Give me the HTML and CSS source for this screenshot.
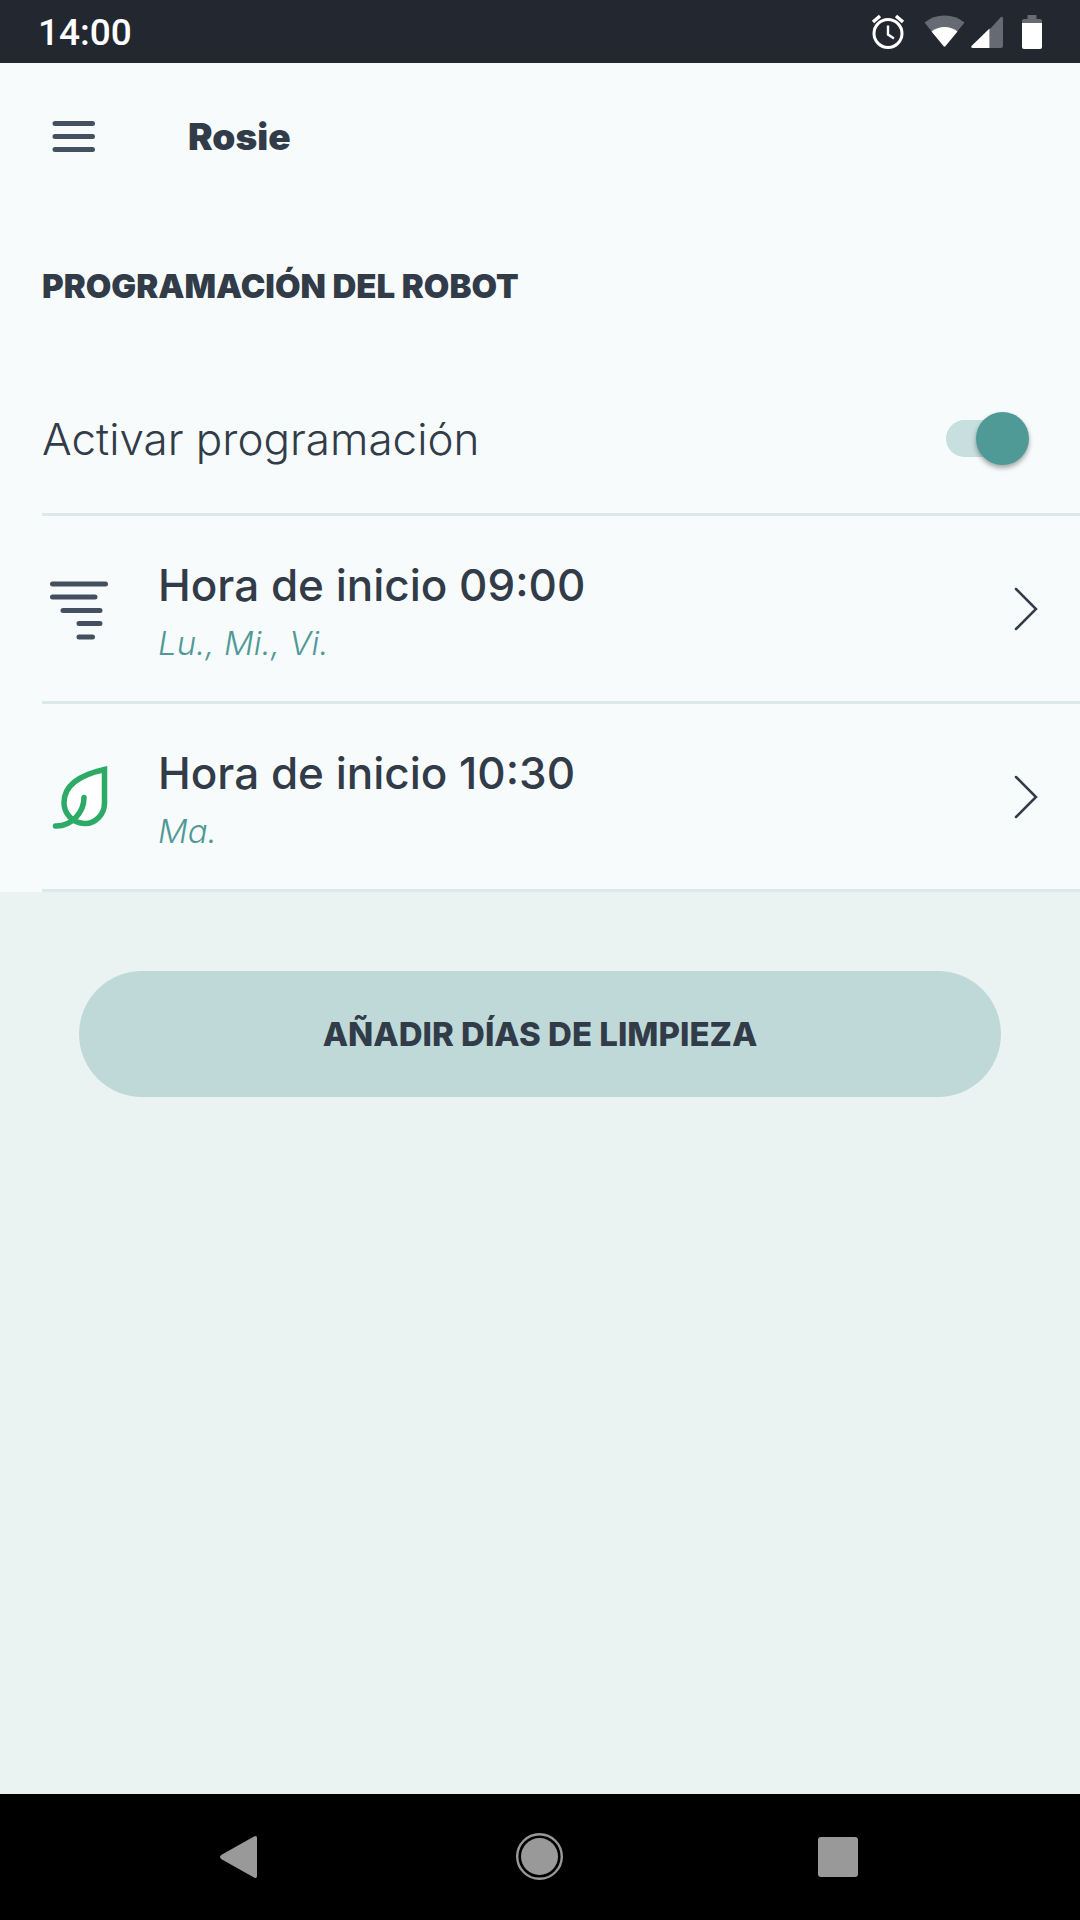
FILE: index.html
```html
<!DOCTYPE html>
<html lang="es">
<head>
<meta charset="utf-8">
<meta name="viewport" content="width=device-width, initial-scale=1">
<title>Rosie</title>
<link rel="stylesheet" href="styles.css">
</head>
<body>
<div class="status-bar">
  <time class="clock">14:00</time>
  <div class="status-icons">
    <svg class="icon-alarm" width="34" height="36" viewBox="0 0 34 36" fill="none" stroke="#fff">
      <circle cx="17" cy="19.500" r="14" stroke-width="3"/>
      <path d="M17 11.500v9l6 4" stroke-width="2.4"/>
      <path d="M2 8l7-6M32 8l-7-6" stroke-width="3.500"/>
    </svg>
    <svg class="icon-wifi" width="41" height="36" viewBox="0 0 41 36">
      <path d="M.5 8.500Q9 1.500 20.500 1.500T40.500 8.500L21.500 32q-1 1-2 0z" fill="#666a72"/>
      <path d="M7.500 17.500Q13 13 20.500 13t13 4.500L21.500 32q-1 1-2 0z" fill="#fff"/>
    </svg>
    <svg class="icon-signal" width="32" height="36" viewBox="0 0 32 36">
      <path d="M18.500 15.500L29.500 3.500q2.500-2 2.500 1V32q0 2-2 2H18.500z" fill="#666a72"/>
      <path d="M18.500 14.500V34H2q-2.500 0-1.500-2z" fill="#fff"/>
    </svg>
    <svg class="icon-battery" width="20" height="36" viewBox="0 0 20 36">
      <path d="M5.500 1h9v4H18q2 0 2 2v3H0V7q0-2 2-2h3.500z" fill="#666a72"/>
      <path d="M0 9h20v24q0 2-2 2H2q-2 0-2-2z" fill="#fff"/>
    </svg>
  </div>
</div>

<main class="screen">
  <section class="panel">
    <header class="app-bar">
      <button class="menu-button" type="button" aria-label="Menú">
        <svg width="44" height="34" viewBox="0 0 44 34" stroke="#444f5f" stroke-width="5" stroke-linecap="round">
          <path d="M3 3.500h37.500M3 16.500h37.500M3 29.500h37.500"/>
        </svg>
      </button>
      <h1 class="app-title">Rosie</h1>
    </header>
    <h2 class="section-title">PROGRAMACIÓN DEL ROBOT</h2>
    <div class="rows">
      <div class="row row-toggle">
        <label class="toggle-label" for="schedule">Activar programación</label>
        <input class="switch" id="schedule" type="checkbox" role="switch" checked>
      </div>
      <a class="row" href="#lu-mi-vi">
        <svg class="row-icon" width="68" height="68" viewBox="0 0 68 68" stroke="#444f5f" stroke-width="5" stroke-linecap="round">
          <path d="M10.500 9h53M10.500 22h42.500M21 35.500h37M37 48.500h21M37 62h13.500"/>
        </svg>
        <span class="row-text">
          <span class="row-title">Hora de inicio 09:00</span>
          <span class="row-days">Lu., Mi., Vi.</span>
        </span>
        <svg class="chevron" width="24" height="44" viewBox="0 0 24 44" fill="none" stroke="#323c49" stroke-width="2.500" stroke-linecap="round">
          <path d="M2 2l20 20L2 42"/>
        </svg>
      </a>
      <a class="row" href="#ma">
        <svg class="row-icon" width="68" height="68" viewBox="0 0 68 68" fill="none" stroke="#2dab66" stroke-width="5.500" stroke-linecap="round">
          <path d="M62.500 6.500V40C62.500 52 53 60.500 43 60.500C30 60.500 22 50 22 39.500C22 20 42 11 62.500 6.500z" fill="#fff"/>
          <path d="M42 34.500C42 49 30 63.500 13.500 63"/>
        </svg>
        <span class="row-text">
          <span class="row-title">Hora de inicio 10:30</span>
          <span class="row-days">Ma.</span>
        </span>
        <svg class="chevron" width="24" height="44" viewBox="0 0 24 44" fill="none" stroke="#323c49" stroke-width="2.500" stroke-linecap="round">
          <path d="M2 2l20 20L2 42"/>
        </svg>
      </a>
    </div>
  </section>
  <div class="actions">
    <button class="add-button" type="button">AÑADIR DÍAS DE LIMPIEZA</button>
  </div>
</main>

<nav class="nav-bar">
  <button class="nav-button" type="button" aria-label="Atrás">
    <svg width="48" height="48" viewBox="0 0 48 48" fill="#999">
      <path d="M6 21.500L38 3.500q3-1.500 3 1.500v38q0 3-3 1.500L6 26.500q-4-2.500 0-5z"/>
    </svg>
  </button>
  <button class="nav-button" type="button" aria-label="Inicio">
    <svg width="48" height="48" viewBox="0 0 48 48" fill="#999">
      <circle cx="23.500" cy="23.500" r="18.500"/>
      <circle cx="23.500" cy="23.500" r="22.300" fill="none" stroke="#999" stroke-width="2.400"/>
    </svg>
  </button>
  <button class="nav-button" type="button" aria-label="Recientes">
    <svg width="48" height="48" viewBox="0 0 48 48" fill="#999">
      <rect x="2" y="4" width="40" height="40" rx="3"/>
    </svg>
  </button>
</nav>
</body>
</html>
```
FILE: styles.css
```css
* {
  box-sizing: border-box;
}

body {
  margin: 0;
  min-height: 100vh;
  display: flex;
  flex-direction: column;
  background: #eaf3f2;
  color: #323c49;
  font-family: Inter, "Liberation Sans", sans-serif;
}

button {
  border: 0;
  padding: 0;
  background: none;
  color: inherit;
  font: inherit;
  cursor: pointer;
}

svg {
  display: block;
  flex: none;
}

.status-bar {
  height: 63px;
  padding: 2px 38px 0;
  display: flex;
  align-items: center;
  justify-content: space-between;
  background: #232830;
  color: #fff;
}

.clock {
  font: 500 37px/44px Roboto, sans-serif;
}

.status-icons {
  display: flex;
  padding-bottom: 2px;
}

.icon-wifi {
  margin-left: 19px;
}

.icon-signal {
  margin-left: 6px;
}

.icon-battery {
  margin-left: 19px;
}

.screen {
  flex: 1;
}

.panel {
  background: #f7fbfc;
}

.app-bar {
  height: 147px;
  padding: 0 52px;
  display: flex;
  align-items: center;
  gap: 92px;
}

.app-title {
  margin: 0;
  font-size: 37px;
  line-height: 44px;
  font-weight: 900;
}

.section-title {
  margin: 0;
  padding: 56px 42px 0;
  font-size: 33px;
  line-height: 40px;
  font-weight: 900;
}

.rows {
  padding: 58px 0 0 42px;
}

.row {
  height: 188px;
  padding-right: 42px;
  display: flex;
  align-items: center;
  border-bottom: 3px solid #dbe9e9;
  color: inherit;
  text-decoration: none;
}

.row-toggle {
  height: 152px;
  padding-right: 50px;
  justify-content: space-between;
}

.toggle-label {
  font-size: 44px;
  line-height: 52px;
  font-weight: 300;
}

.switch {
  appearance: none;
  width: 84px;
  height: 54px;
  margin: 0;
  display: flex;
  align-items: center;
  cursor: pointer;
}

.switch::before {
  content: "";
  width: 64px;
  height: 37px;
  border-radius: 19px;
  background: #c7dfde;
}

.switch::after {
  content: "";
  width: 53px;
  height: 53px;
  margin-left: -64px;
  border-radius: 50%;
  background: #8fa5a5;
  box-shadow: 0 3px 5px rgba(0, 0, 0, 0.35);
}

.switch:checked::after {
  margin-left: -34px;
  background: #4f9997;
}

.row-text {
  flex: 1;
  padding: 4px 0 0 48px;
  display: flex;
  flex-direction: column;
  gap: 12px;
}

.row-title {
  font-size: 44px;
  line-height: 52px;
  font-weight: 500;
}

.row-days {
  color: #4f9997;
  font-size: 33px;
  line-height: 40px;
  font-style: italic;
  font-weight: 300;
}

.actions {
  padding: 79px;
}

.add-button {
  width: 100%;
  height: 126px;
  border-radius: 63px;
  background: #bfd9d9;
  font-size: 33px;
  line-height: 40px;
  font-weight: 800;
}

.nav-bar {
  height: 126px;
  padding: 0 90px;
  display: grid;
  grid-template-columns: repeat(3, 1fr);
  background: #000;
}

.nav-button {
  display: flex;
  align-items: center;
  justify-content: center;
}
```
